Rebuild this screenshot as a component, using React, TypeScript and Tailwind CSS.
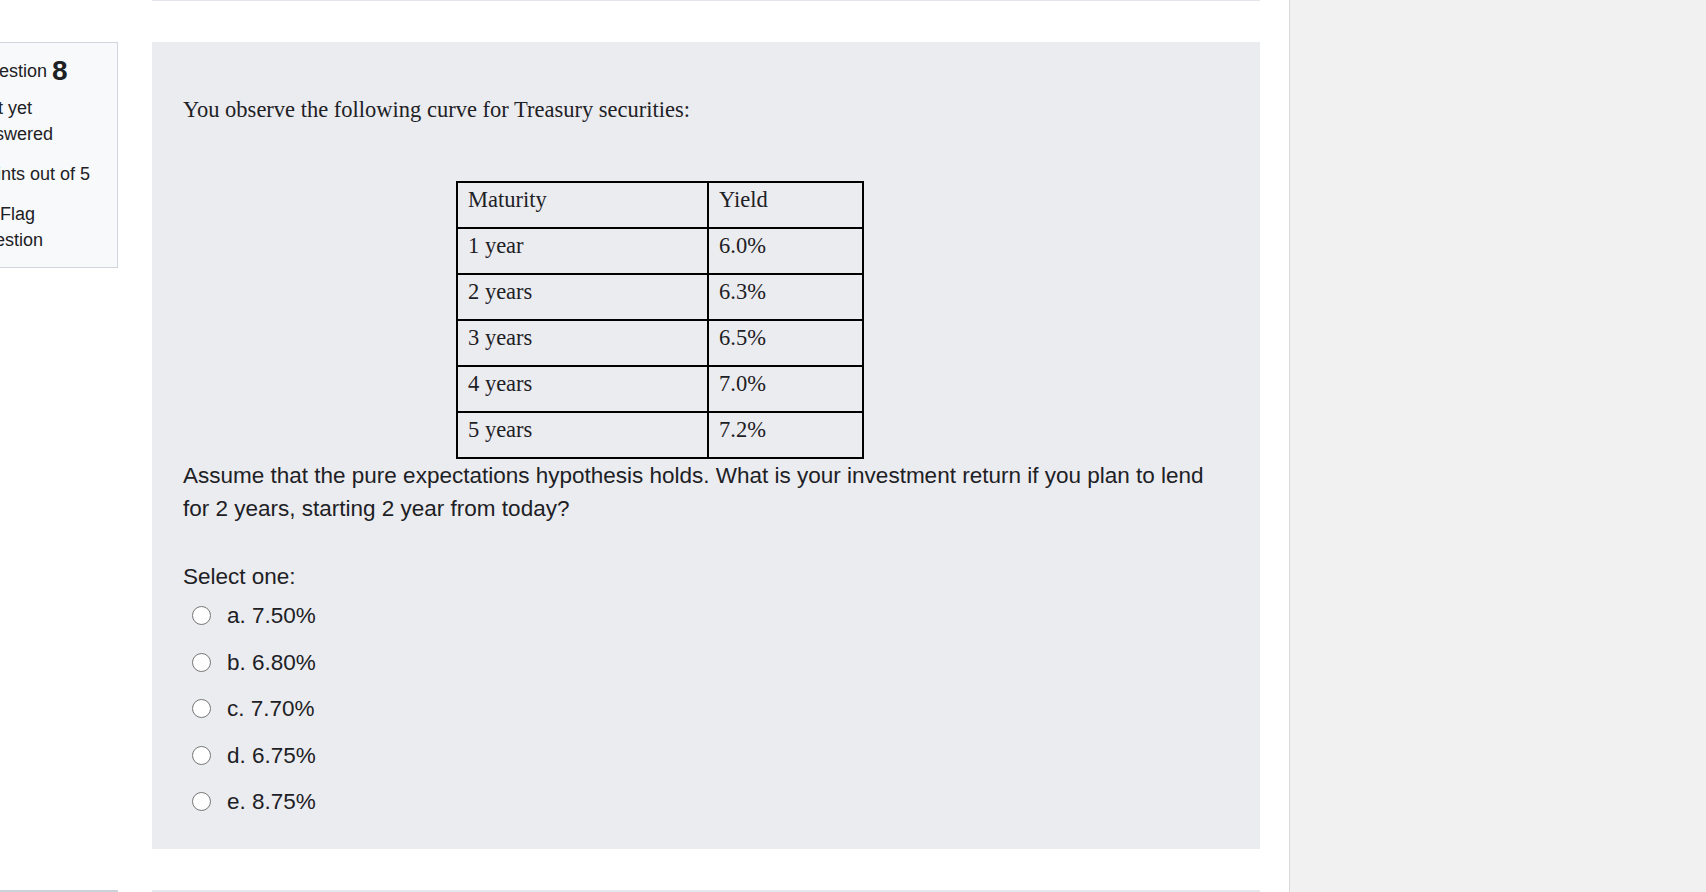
const options = ["a. 7.50%", "b. 6.80%", "c. 7.70%", "d. 6.75%", "e. 8.75%"];

const rows = [
  ["Maturity", "Yield"],
  ["1 year", "6.0%"],
  ["2 years", "6.3%"],
  ["3 years", "6.5%"],
  ["4 years", "7.0%"],
  ["5 years", "7.2%"],
];

function InfoBox() {
  return (
    <div className="-ml-[40px] w-[158px] shrink-0 self-start border border-[#cfd6de] bg-[#f8f9fa] pl-[14px] pr-[8px] pt-[10px] pb-[14px] text-[18px] leading-[26px] text-[#1d2125] whitespace-nowrap">
      <div className="h-[36px] flex items-center">
        Question <span className="ml-[5px] text-[28px] font-bold">8</span>
      </div>
      <div className="mt-[6px]">
        Not yet
        <br />
        answered
      </div>
      <div className="mt-[14px]">Points out of 5</div>
      <div className="mt-[14px]">
        <span className="inline-block w-[25px]" />
        Flag
        <br />
        question
      </div>
    </div>
  );
}

function YieldTable() {
  return (
    <table className="ml-[273px] border-collapse font-['Liberation_Serif','Times_New_Roman',serif] text-[22.5px] text-[#1d2125]">
      <tbody>
        {rows.map((r) => (
          <tr key={r[0]}>
            <td className="w-[251px] h-[46px] border-2 border-black px-[10px] pt-[4px] pb-[14px] leading-[25px] align-top">
              {r[0]}
            </td>
            <td className="w-[155px] h-[46px] border-2 border-black px-[10px] pt-[4px] pb-[14px] leading-[25px] align-top">
              {r[1]}
            </td>
          </tr>
        ))}
      </tbody>
    </table>
  );
}

function Question() {
  return (
    <div className="w-[1108px] shrink-0 bg-[#ebecf0] pl-[31px] pr-[31px] pt-[53px] pb-[24px] text-[#1d2125]">
      <p className="font-['Liberation_Serif','Times_New_Roman',serif] text-[22.5px] leading-[30px]">
        You observe the following curve for Treasury securities:
      </p>
      <div className="mt-[56px]">
        <YieldTable />
      </div>
      <p className="font-['Liberation_Sans',Arial,sans-serif] text-[22.5px] leading-[33px]">
        Assume that the pure expectations hypothesis holds. What is your investment return if you plan to lend
        for 2 years, starting 2 year from today?
      </p>
      <div className="mt-[35px] font-['Liberation_Sans',Arial,sans-serif] text-[22.5px]">
        <div className="leading-[33px]">Select one:</div>
        <div>
          {options.map((o) => (
            <div key={o} className="flex h-[46.5px] items-center pl-[9px]">
              <span className="h-[19px] w-[19px] rounded-full border border-[#767676] bg-white" />
              <span className="ml-[16px] leading-[33px]">{o}</span>
            </div>
          ))}
        </div>
      </div>
    </div>
  );
}

export default function App() {
  return (
    <div className="flex h-[892px] w-[1706px] overflow-hidden bg-white font-['Liberation_Sans',Arial,sans-serif]">
      <div className="w-[1289px] shrink-0 flex flex-col">
        <div className="ml-[152px] h-[1px] w-[1108px] bg-[#e4e5ec]" />
        <div className="mt-[41px] flex gap-[34px]">
          <InfoBox />
          <Question />
        </div>
        <div className="mt-[41px] flex gap-[34px]">
          <div className="-ml-[40px] w-[158px] h-[2px] border-t-2 border-[#c9d1da]" />
          <div className="w-[1108px] h-[2px] bg-[#e7e8ee]" />
        </div>
      </div>
      <div className="flex-1 border-l border-[#d9d9d9] bg-[#f1f1f1]" />
    </div>
  );
}
